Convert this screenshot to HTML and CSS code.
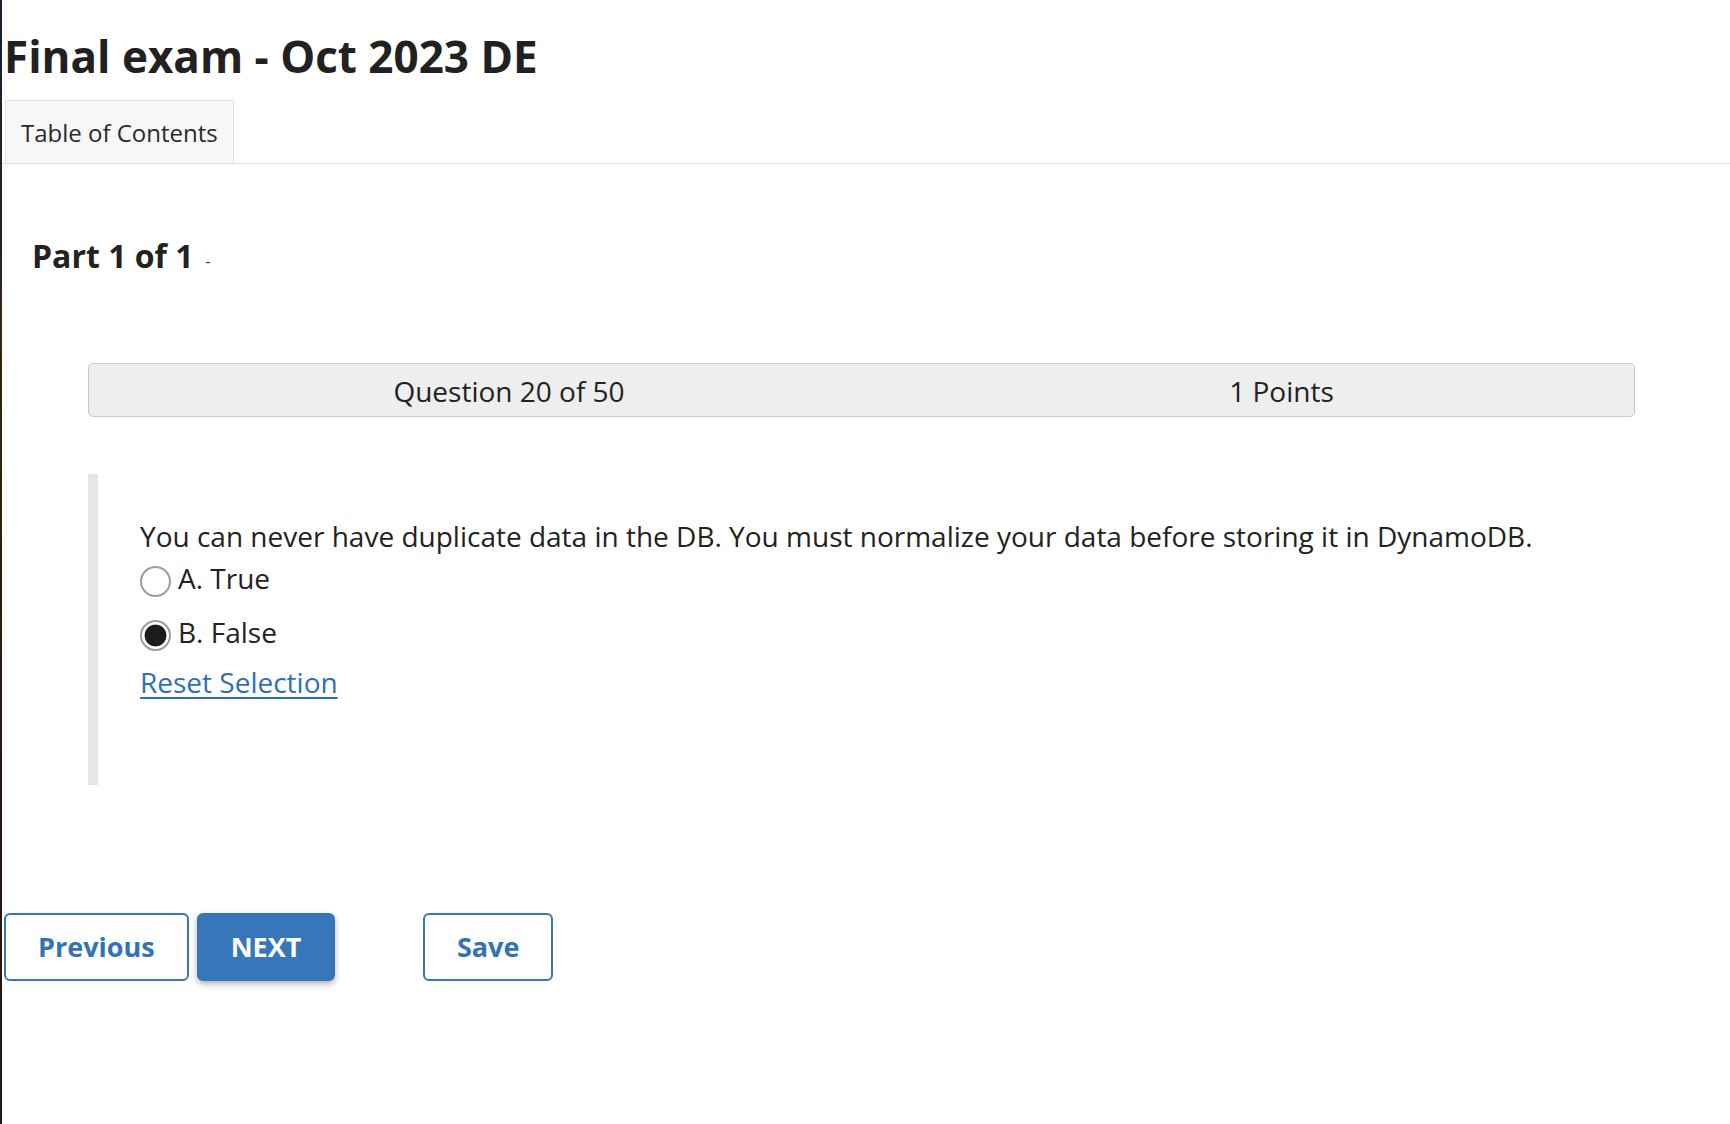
FILE: index.html
```html
<!DOCTYPE html>
<html lang="en">
<head>
<meta charset="utf-8">
<title>Final exam - Oct 2023 DE</title>
<link rel="stylesheet" href="styles.css">
</head>
<body>
<div class="page">
  <h1 class="title">Final exam - Oct 2023 DE</h1>
  <div class="tabs">
    <div class="tab">Table of Contents</div>
  </div>
  <h2 class="part">Part 1 of 1 <span class="part-sep">-</span></h2>
  <div class="qbar">
    <div class="qbar-cell">Question 20 of 50</div>
    <div class="qbar-cell">1 Points</div>
  </div>
  <div class="question">
    <p class="qtext">You can never have duplicate data in the DB. You must normalize your data before storing it in DynamoDB.</p>
    <label class="option option-a"><input type="radio" name="q20" class="radio"><span>A. True</span></label>
    <label class="option option-b"><input type="radio" name="q20" class="radio" checked><span>B. False</span></label>
    <a class="reset" href="#">Reset Selection</a>
  </div>
  <div class="actions">
    <button class="btn btn-outline">Previous</button>
    <button class="btn btn-primary">NEXT</button>
    <button class="btn btn-outline btn-save">Save</button>
  </div>
</div>
</body>
</html>
```
FILE: styles.css
```css
html, body {
  margin: 0;
  padding: 0;
  background: #ffffff;
}
body {
  font-family: "Open Sans", "Noto Sans", "Liberation Sans", sans-serif;
  color: #222222;
  min-height: 1124px;
  border-left: 2px solid #1d2232;
  border-image: linear-gradient(to bottom, #1b2030 0, #1f2433 270px, #3a2416 300px, #2a180e 700px, #241610 1124px) 1;
  box-sizing: border-box;
}
.page {
  display: flex;
  flex-direction: column;
  align-items: flex-start;
}
.title {
  margin: 26px 0 0 0;
  padding-left: 2px;
  font-size: 44px;
  font-weight: 700;
  line-height: 60px;
  color: #212121;
}
.tabs {
  align-self: stretch;
  display: flex;
  margin-top: 14px;
  border-bottom: 1px solid #e2e2e2;
  padding-left: 3px;
}
.tab {
  background: #f7f7f7;
  border: 1px solid #e2e2e2;
  border-bottom: none;
  font-size: 24px;
  line-height: 32px;
  padding: 16px 15px 14px 15px;
  color: #2a2a2a;
}
.part {
  margin: 70px 0 0 30px;
  font-size: 32px;
  font-weight: 700;
  line-height: 43px;
  color: #222222;
}
.part-sep {
  font-size: 18px;
  font-weight: 400;
  color: #555555;
  margin-left: 3px;
}
.qbar {
  margin: 80px 0 0 86px;
  width: 1547px;
  box-sizing: border-box;
  display: grid;
  grid-template-columns: 840px 1fr;
  background: #eeeeee;
  border: 1px solid #c9c9c9;
  border-radius: 5px;
  font-size: 28px;
  line-height: 38px;
  padding: 8px 0 6px 0;
  color: #222222;
}
.qbar-cell {
  text-align: center;
}
.question {
  margin: 57px 0 0 86px;
  border-left: 10px solid #e6e6e6;
  padding: 43px 0 84px 42px;
  display: flex;
  flex-direction: column;
  align-items: flex-start;
  font-size: 28px;
  line-height: 38px;
}
.qtext {
  margin: 0 0 4px 0;
}
.option {
  display: flex;
  align-items: flex-start;
  cursor: pointer;
}
.option-a {
  margin-bottom: 16px;
}
.option-b {
  margin-bottom: 12px;
}
.radio {
  appearance: none;
  -webkit-appearance: none;
  width: 31px;
  height: 31px;
  margin: 7px 7px 0 0;
  border: 2px solid #9d9d9d;
  border-radius: 50%;
  background: #ffffff;
  box-sizing: border-box;
  flex: none;
}
.radio:checked {
  background: radial-gradient(circle, #1c1c1c 0, #1c1c1c 10.5px, #ffffff 11.3px);
}
.reset {
  color: #2f6fb6;
  text-decoration: underline;
  text-underline-offset: 4px;
  text-decoration-thickness: 2px;
}
.actions {
  margin: 128px 0 0 2px;
  display: flex;
  gap: 8px;
}
.btn {
  font-family: "Open Sans", "Noto Sans", "Liberation Sans", sans-serif;
  font-size: 27px;
  font-weight: 700;
  line-height: 38px;
  height: 68px;
  padding: 0 32px;
  border-radius: 6px;
  border: 2px solid #3676b9;
  cursor: pointer;
}
.btn-outline {
  background: #ffffff;
  color: #3472b6;
}
.btn-primary {
  background: #3676b9;
  color: #ffffff;
  padding: 0 32px;
  box-shadow: 0 3px 6px rgba(0, 0, 0, 0.3);
}
.btn-save {
  margin-left: 80px;
  padding: 0 31.5px;
}
```
